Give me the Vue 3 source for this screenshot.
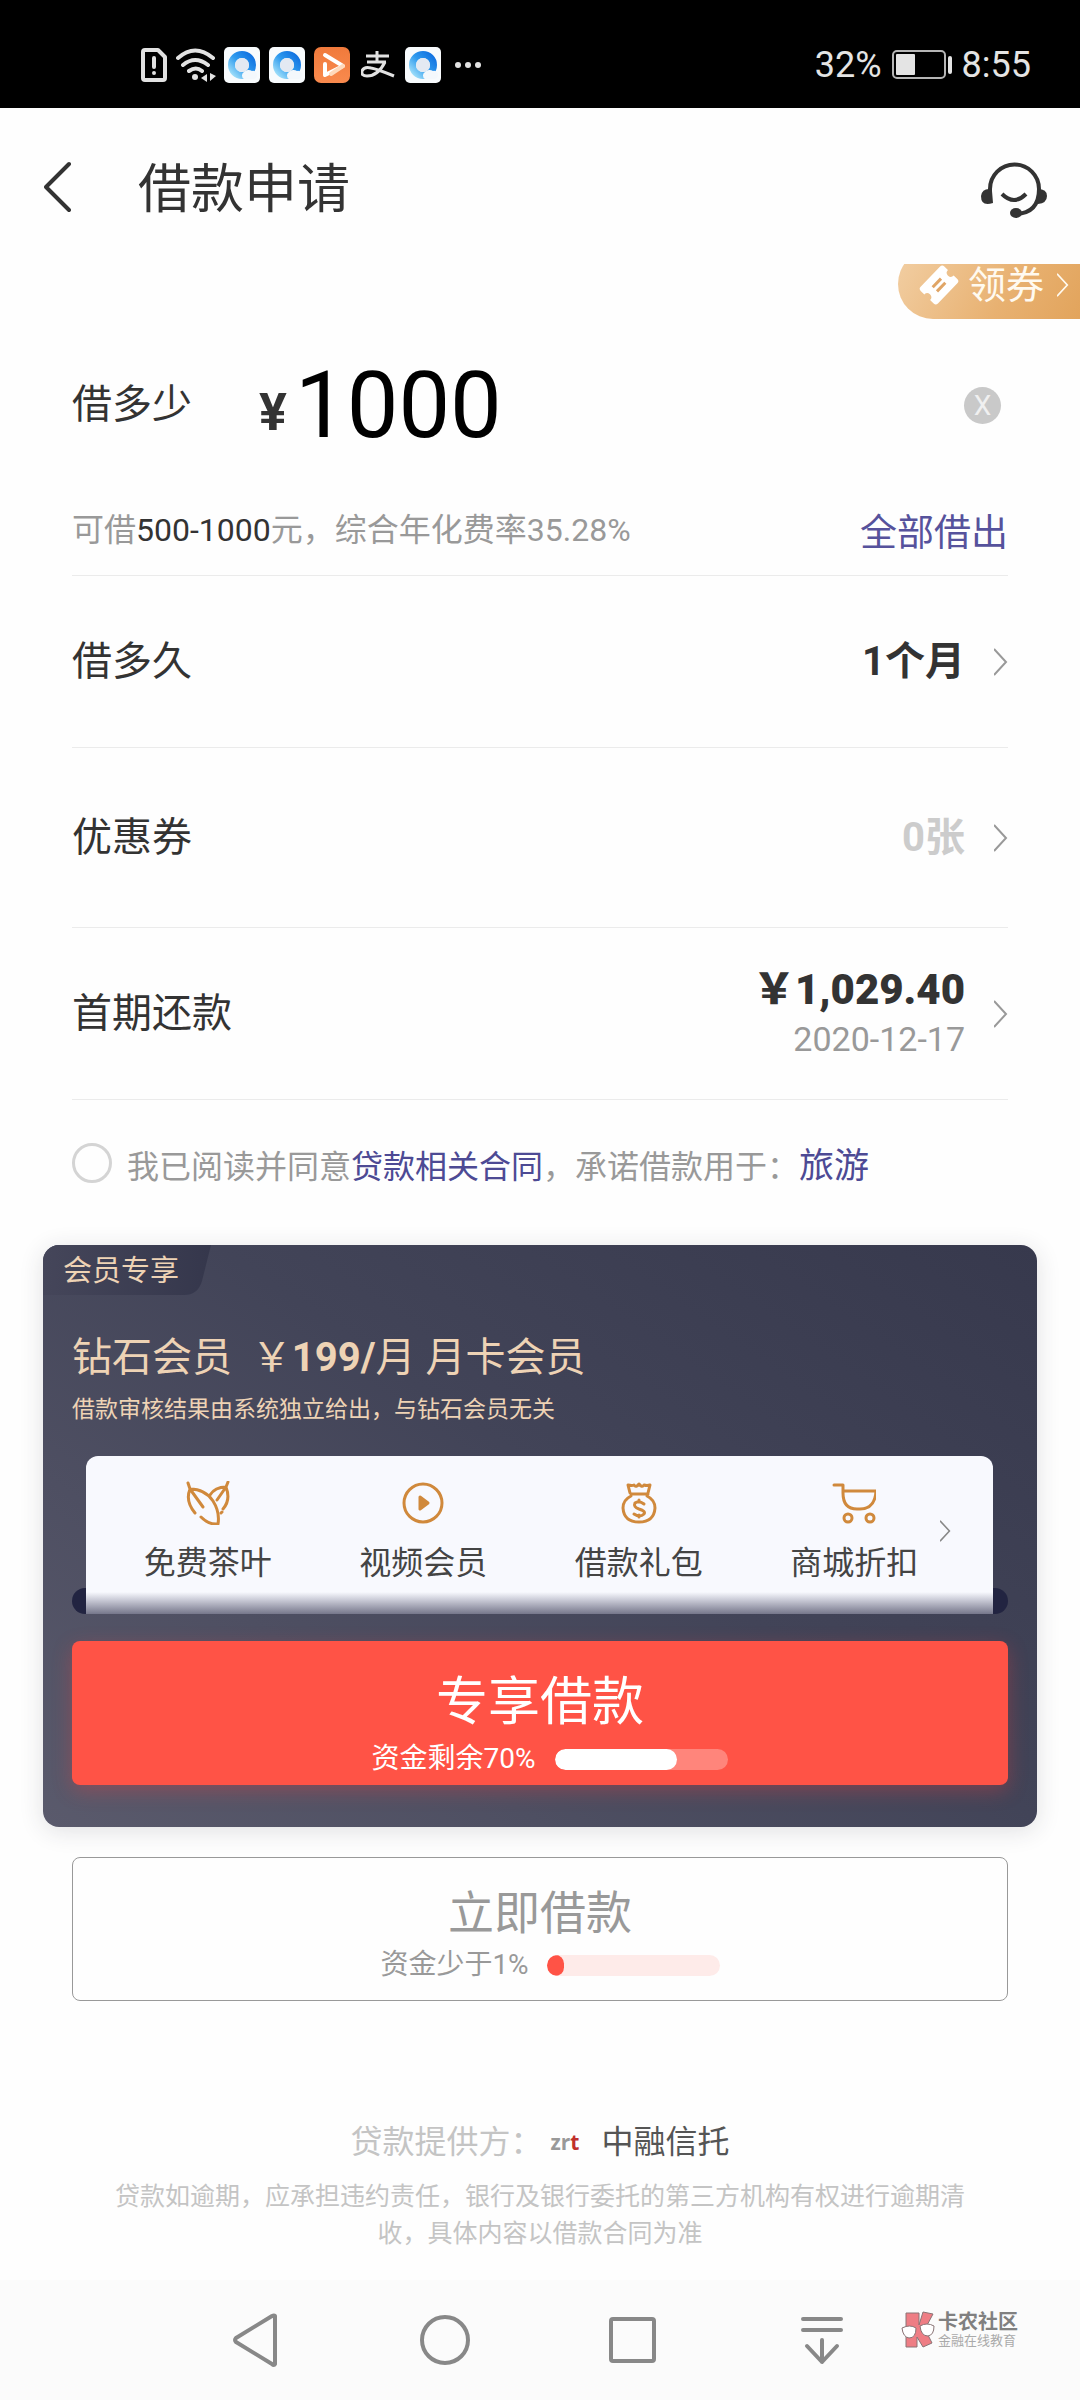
<script setup>
import { ref } from 'vue'

const amount = ref('1000')
const agreed = ref(false)

const perks = [
  { id: 'tea', label: '免费茶叶' },
  { id: 'video', label: '视频会员' },
  { id: 'gift', label: '借款礼包' },
  { id: 'mall', label: '商城折扣' },
]
const memberFund = 70
const normalFund = 10
</script>

<template>
  <div class="page">
    <svg class="defs" aria-hidden="true">
      <defs>
        <linearGradient id="ring" x1="1" y1="0" x2="0" y2="1">
          <stop offset="0" stop-color="#0f6fe0" />
          <stop offset="0.5" stop-color="#2f9bee" />
          <stop offset="1" stop-color="#a5e2fa" />
        </linearGradient>
        <linearGradient id="orange" x1="0" y1="0" x2="0" y2="1">
          <stop offset="0" stop-color="#f07a3c" />
          <stop offset="1" stop-color="#f98a4e" />
        </linearGradient>
        <symbol id="browser" viewBox="0 0 36 36">
          <rect width="36" height="36" rx="5" fill="#f8fbfd" />
          <circle cx="18" cy="18" r="10.500" fill="none" stroke="url(#ring)" stroke-width="7" />
          <circle cx="18" cy="18" r="7" fill="#e3e9f2" />
          <path d="M20 32a4 4 0 0 1 0-7 6 6 0 0 1 8-1 4 4 0 0 1 2 8z" fill="#f4f8fc" />
        </symbol>
        <symbol id="chevron" viewBox="0 0 14 28">
          <path d="M0 1l12 13L0 27" fill="none" stroke="currentColor" stroke-width="2" />
        </symbol>
      </defs>
    </svg>

    <div class="status">
      <div class="status-icons">
        <svg width="26" height="34" viewBox="0 0 26 34" fill="none" stroke="#e2e2e2" stroke-width="4" stroke-linejoin="round" stroke-linecap="round">
          <path d="M4 2h13l7 7v21q0 2-2 2H4q-2 0-2-2V4q0-2 2-2z" />
          <path d="M13 10v9M13 25v0" />
        </svg>
        <svg class="wifi" width="40" height="34" viewBox="0 0 40 34" fill="none" stroke="#e2e2e2" stroke-width="4" stroke-linecap="round">
          <path d="M2 10Q19-5 37 10M7 17q12-10 25 0M13 23q7-5 13 0" />
          <circle cx="19" cy="29" r="3" fill="#e2e2e2" stroke="none" />
          <path d="M31 26v8l-6-4zM34 25v8l6-5z" fill="#e2e2e2" stroke="none" />
        </svg>
        <svg width="36" height="36"><use href="#browser" /></svg>
        <svg width="36" height="36"><use href="#browser" /></svg>
        <svg width="36" height="36" viewBox="0 0 36 36">
          <rect width="36" height="36" rx="7" fill="url(#orange)" />
          <path d="M11 8l18 11-18 9V17" fill="none" stroke="#fff" stroke-width="4" stroke-linejoin="round" stroke-linecap="round" />
          <path d="M17 27l12-8" stroke="#ffd9bb" stroke-width="4" stroke-linecap="round" />
        </svg>
        <svg class="pay" width="34" height="28" viewBox="0 0 34 28" fill="none" stroke="#e2e2e2" stroke-width="3">
          <path d="M5 5h23M16 0v11M6 11h19M24 11Q17 25 6 25q-6 0-5-5 2-5 9-3 6 1 23 8" />
        </svg>
        <svg width="36" height="36"><use href="#browser" /></svg>
        <svg class="dots" width="28" height="8" viewBox="0 0 28 8" fill="#e2e2e2">
          <circle cx="4" cy="4" r="3" /><circle cx="14" cy="4" r="3" /><circle cx="24" cy="4" r="3" />
        </svg>
      </div>
      <div class="status-info">
        <span>32%</span>
        <svg width="60" height="30" viewBox="0 0 60 30">
          <rect x="1" y="1" width="52" height="27" rx="4" fill="none" stroke="#b5b5b5" stroke-width="2" />
          <rect x="4" y="4" width="19" height="21" rx="1" fill="#e4e4e4" />
          <rect x="56" y="6" width="4" height="18" rx="2" fill="#e4e4e4" />
        </svg>
        <span>8:55</span>
      </div>
    </div>

    <header class="header">
      <button class="icon-btn" aria-label="返回">
        <svg width="28" height="58" viewBox="0 0 28 58" fill="none" stroke="#333" stroke-width="4" stroke-linecap="round" stroke-linejoin="round">
          <path d="M25 3L2 26l23 23" />
        </svg>
      </button>
      <h1>借款申请</h1>
      <button class="icon-btn" aria-label="客服">
        <svg width="66" height="58" viewBox="0 -2 66 58" fill="none" stroke="#333" stroke-width="4">
          <path d="M9 34V26a24 24 0 0 1 49 0Q58 50 35 51" />
          <path d="M21 31q12 12 24 0" />
          <path d="M8 26q3-1 3 2l1 12q-12 4-12-7 1-7 8-7z" fill="#333" stroke="none" />
          <path d="M57 26q9 0 9 7t-9 8z" fill="#333" stroke="none" />
          <ellipse cx="35" cy="50" rx="6" ry="5" fill="#333" stroke="none" />
        </svg>
      </button>
    </header>

    <main>
      <div class="coupon-clip">
        <button class="coupon">
          <svg width="40" height="40" viewBox="0 0 40 40">
            <g transform="rotate(-46 20 20)">
              <path d="M3 11q0-3 3-3h28q3 0 3 3v5q-4 0-4 4t4 4v5q0 3-3 3H6q-3 0-3-3v-5q4 0 4-4t-4-4z" fill="#fff" />
              <path d="M14 17h12M14 23h12" stroke="#e0a566" stroke-width="3" />
            </g>
          </svg>
          <span>领券</span>
          <svg width="12" height="24"><use href="#chevron" /></svg>
        </button>
      </div>

      <section class="form">
        <div class="amount">
          <label for="amount">借多少</label>
          <span class="yen">¥</span>
          <input id="amount" v-model="amount" inputmode="numeric" />
          <button class="clear" aria-label="清除" @click="amount = ''">X</button>
        </div>
        <div class="hint">
          <span>可借<b>500-1000</b>元，综合年化费率35.28%</span>
          <button class="all" @click="amount = '1000'">全部借出</button>
        </div>
        <button class="row">
          <span>借多久</span>
          <span class="value">1个月</span>
          <svg width="14" height="28"><use href="#chevron" /></svg>
        </button>
        <button class="row tall">
          <span>优惠券</span>
          <span class="value muted">0张</span>
          <svg width="14" height="28"><use href="#chevron" /></svg>
        </button>
        <button class="row">
          <span>首期还款</span>
          <span class="value due"><strong>￥1,029.40</strong><time>2020-12-17</time></span>
          <svg width="14" height="28"><use href="#chevron" /></svg>
        </button>
        <div class="agree">
          <input id="agree" v-model="agreed" type="checkbox" />
          <p>
            <label for="agree">我已阅读并同意</label><a href="#contract">贷款相关合同</a>，承诺借款用于：<a class="use" href="#purpose">旅游</a>
          </p>
        </div>
      </section>

      <section class="card">
        <div class="tab">
          <svg class="tab-bg" viewBox="0 0 168 50" preserveAspectRatio="none" aria-hidden="true">
            <defs>
              <linearGradient id="tabfill" x1="0" y1="0" x2="1" y2="0">
                <stop offset="0" stop-color="#45465a" />
                <stop offset="1" stop-color="#35374c" />
              </linearGradient>
            </defs>
            <path d="M0 0h168l-9 36q-4 14-18 14H0z" fill="url(#tabfill)" />
          </svg>
          <span>会员专享</span>
        </div>
        <div class="card-body">
          <h2>钻石会员&nbsp; ￥<b>199/</b>月 月卡会员</h2>
          <p class="note">借款审核结果由系统独立给出，与钻石会员无关</p>
          <div class="slot">
            <div class="perks">
              <ul>
                <li v-for="perk in perks" :key="perk.id">
                  <svg width="44" height="44" viewBox="0 0 44 44" fill="none" stroke="#d0893c" stroke-width="3" stroke-linecap="round" stroke-linejoin="round">
                    <template v-if="perk.id === 'tea'">
                      <path d="M2 2l2 6Q19 8 27 20q7 11 5 23-9 1-17-7M9 32Q-1 20 4 8l13 18" />
                      <path d="M24 14q5-8 16-8 5 13-3 22M42 1l-2 5-9 13M36 31l-1 1" />
                    </template>
                    <template v-else-if="perk.id === 'video'">
                      <circle cx="22" cy="22" r="19" />
                      <path d="M19 16l8 6-8 6z" fill="#d0893c" />
                    </template>
                    <template v-else-if="perk.id === 'gift'">
                      <path d="M14 15Q6 19 6 27q1 14 16 14t16-14q0-8-8-12M14 13h17M13 12L11 4q4 1 6 0 2 3 5-1 3 4 5 1 3 1 6 0l-2 8" />
                      <path d="M27 23q-5-4-9-1-2 4 4 6 7 2 5 5-4 4-10 0M22 19v2M22 34v2" />
                    </template>
                    <template v-else>
                      <path d="M2 4h9v8q0 16 14 16h3q15 0 16-18H11" />
                      <circle cx="16" cy="37" r="4" /><circle cx="38" cy="37" r="4" />
                    </template>
                  </svg>
                  <span>{{ perk.label }}</span>
                </li>
              </ul>
              <svg class="more" width="11" height="22"><use href="#chevron" /></svg>
            </div>
          </div>
          <button class="cta primary">
            <span class="cta-title">专享借款</span>
            <span class="fund">
              资金剩余70%
              <span class="bar"><i :style="{ width: memberFund + '%' }"></i></span>
            </span>
          </button>
        </div>
      </section>

      <button class="cta plain">
        <span class="cta-title">立即借款</span>
        <span class="fund">
          资金少于1%
          <span class="bar"><i :style="{ width: normalFund + '%' }"></i></span>
        </span>
      </button>

      <footer>
        <p class="provider">
          <span>贷款提供方：</span>
          <span class="zrt">zr<em>t</em></span>
          <strong>中融信托</strong>
        </p>
        <p class="legal">贷款如逾期，应承担违约责任，银行及银行委托的第三方机构有权进行逾期清收，具体内容以借款合同为准</p>
      </footer>
    </main>

    <nav class="nav">
      <button aria-label="后退">
        <svg width="52" height="56" viewBox="0 0 52 56"><path d="M44 4v48q-1 2-3 0L5 30q-2-2 0-4L41 4q2-1 3 0z" /></svg>
      </button>
      <button aria-label="主页">
        <svg width="52" height="56" viewBox="0 0 52 56"><circle cx="25" cy="28" r="23" /></svg>
      </button>
      <button aria-label="最近任务">
        <svg width="52" height="56" viewBox="0 0 52 56"><rect x="2" y="7" width="43" height="42" rx="2" /></svg>
      </button>
      <button aria-label="收起">
        <svg width="52" height="56" viewBox="0 0 52 56"><path d="M5 7h38M5 18h38M24 28v22M9 34l15 16 15-16" /></svg>
      </button>
      <div class="mark">
        <svg width="34" height="38" viewBox="0 0 34 38" stroke="#8a7476" stroke-width="1">
          <path d="M5 2h13v12l4-13 10 2-8 15 7 14-9 4-6-10v10H5z" fill="#ee7d84" />
          <path d="M1 17q8-4 14 0 0 10-7 10-6-1-7-10zM19 15q7-4 14 0 0 9-6 10-7 0-8-10z" fill="#fff" />
        </svg>
        <div>
          <strong>卡农社区</strong>
          <small>金融在线教育</small>
        </div>
      </div>
    </nav>
  </div>
</template>

<style>
body {
  margin: 0;
  background: #fefefe;
}
</style>

<style scoped>
.page {
  display: flex;
  flex-direction: column;
  min-height: 100vh;
  color: #333;
  font-family: Roboto, "Noto Sans CJK SC", sans-serif;
  line-height: 1.4;
}
.defs {
  position: absolute;
  width: 0;
  height: 0;
}
button {
  padding: 0;
  border: 0;
  background: none;
  color: inherit;
  font: inherit;
  cursor: pointer;
}
svg {
  display: block;
  flex: none;
}
h1, h2, p, ul {
  margin: 0;
  padding: 0;
  font-weight: 400;
}
a {
  color: #4d4a94;
  text-decoration: none;
}

.status {
  display: flex;
  align-items: center;
  justify-content: space-between;
  height: 108px;
  padding: 22px 49px 0 141px;
  box-sizing: border-box;
  background: #000;
  color: #e4e4e4;
  font-size: 36px;
}
.status-icons {
  display: flex;
  align-items: center;
  gap: 9px;
}
.wifi {
  margin-right: -1px;
}
.pay {
  margin: 0 1px 0 2px;
}
.dots {
  margin-left: 4px;
}
.status-info {
  display: flex;
  align-items: center;
  gap: 10px;
}

.header {
  display: flex;
  align-items: center;
  height: 156px;
  padding: 8px 33px 0 44px;
  box-sizing: border-box;
}
.header h1 {
  flex: 1;
  padding-left: 66px;
  font-size: 53px;
  line-height: 72px;
}

.coupon-clip {
  display: flex;
  justify-content: flex-end;
  align-items: flex-end;
  height: 55px;
  overflow: hidden;
}
.coupon {
  display: flex;
  align-items: center;
  gap: 9px;
  height: 70px;
  padding: 2px 11px 0 21px;
  box-sizing: border-box;
  border-radius: 35px 0 0 35px;
  background: linear-gradient(120deg, #f2cfa4, #e8b171 60%, #e2a45c);
  color: #fffaf0;
  font-size: 38px;
  line-height: 38px;
}
.coupon span {
  margin-right: 4px;
}

.form {
  padding: 0 72px;
}
.amount {
  display: flex;
  align-items: center;
  height: 168px;
  padding-top: 4px;
  box-sizing: border-box;
  font-size: 40px;
}
.yen {
  width: 36px;
  margin: 16px 0 0 67px;
  font-size: 52px;
  font-weight: 700;
}
.amount input {
  flex: 1;
  min-width: 0;
  padding: 0;
  border: 0;
  outline: 0;
  background: none;
  color: #000;
  font: 92px Roboto, sans-serif;
}
.clear {
  width: 37px;
  height: 37px;
  margin-right: 7px;
  border-radius: 50%;
  background: #c9c9c9;
  color: #f0f0f0;
  font-size: 28px;
  line-height: 37px;
}
.hint {
  display: flex;
  align-items: center;
  justify-content: space-between;
  height: 89px;
  padding-bottom: 2px;
  box-sizing: border-box;
  border-bottom: 1px solid #ebebeb;
  color: #999;
  font-size: 32px;
}
.hint b {
  color: #333;
  font-weight: 400;
}
.all {
  padding-top: 8px;
  color: #56529c;
  font-size: 37px;
}
.row {
  display: flex;
  align-items: center;
  width: 100%;
  height: 172px;
  border-bottom: 1px solid #ebebeb;
  font-size: 40px;
}
.row.tall {
  height: 180px;
}
.row svg {
  color: #999;
}
.value {
  flex: 1;
  padding-right: 29px;
  font-weight: 700;
  text-align: right;
}
.muted {
  color: #ccc;
}
.due strong,
.due time {
  display: block;
}
.due strong {
  font-size: 42px;
  line-height: 50px;
}
.due time {
  color: #999;
  font-size: 34px;
  font-weight: 400;
  line-height: 48px;
}
.agree {
  display: flex;
  align-items: center;
  height: 145px;
  padding-bottom: 20px;
  box-sizing: border-box;
  color: #999;
  font-size: 32px;
}
.agree input {
  width: 40px;
  height: 40px;
  margin: 0 15px 0 0;
  border: 3px solid #d4d4d4;
  border-radius: 50%;
  appearance: none;
}
.agree p {
  padding-top: 8px;
}
.agree input:checked {
  background: #4d4a94;
}
.use {
  font-size: 35px;
}

.card {
  margin: 0 43px;
  border-radius: 16px;
  overflow: hidden;
  background: linear-gradient(215deg, #37394d, #424458 45%, #5a5a6c);
  box-shadow: 0 4px 24px rgba(40, 44, 60, 0.14);
  color: #eed3b5;
}
.tab {
  display: flex;
  align-items: center;
  position: relative;
  width: 168px;
  height: 50px;
}
.tab-bg {
  position: absolute;
  inset: 0;
  width: 100%;
  height: 100%;
}
.tab span {
  position: relative;
  padding: 2px 0 0 20px;
  font-size: 29px;
}
.card-body {
  padding: 35px 29px 42px;
}
.card h2 {
  font-size: 40px;
  line-height: 56px;
}
.note {
  margin-top: 8px;
  font-size: 23px;
  line-height: 32px;
}
.slot {
  position: relative;
  margin: 30px 0 27px;
  padding: 0 15px 0 14px;
}
.slot::before {
  content: "";
  position: absolute;
  inset: auto 0 0;
  height: 26px;
  border-radius: 13px;
  background: #222441;
}
.perks {
  display: flex;
  position: relative;
  height: 158px;
  padding: 0 31px 0 14px;
  box-sizing: border-box;
  border-radius: 12px 12px 0 0;
  background: linear-gradient(#f8f9fe 136px, #c9cad6 144px, #76778b);
}
.perks ul {
  display: flex;
  flex: 1;
  list-style: none;
}
.perks li {
  display: flex;
  flex: 1;
  flex-direction: column;
  align-items: center;
  gap: 14px;
  padding-top: 25px;
  color: #444;
  font-size: 32px;
  line-height: 48px;
}
.more {
  position: absolute;
  top: 64px;
  right: 42px;
  color: #888;
}
.cta {
  display: flex;
  flex-direction: column;
  align-items: center;
  justify-content: center;
  width: 100%;
  height: 144px;
  padding-top: 8px;
  box-sizing: border-box;
  border-radius: 8px;
}
.cta-title {
  line-height: 72px;
}
.fund {
  display: flex;
  align-items: center;
  gap: 20px;
  padding-left: 20px;
  font-size: 28px;
  line-height: 40px;
}
.bar {
  width: 173px;
  height: 21px;
  border-radius: 11px;
  overflow: hidden;
}
.bar i {
  display: block;
  height: 100%;
  border-radius: 11px;
}
.primary {
  padding-top: 20px;
  background: #ff5346;
  box-shadow: 0 6px 20px rgba(255, 60, 60, 0.3);
  color: #fff;
}
.primary .cta-title {
  font-size: 52px;
}
.primary .bar {
  background: #ff857b;
}
.primary .bar i {
  background: #fff;
}
.plain {
  width: calc(100% - 144px);
  margin: 30px 72px 0;
  border: 1px solid #999;
  color: #999;
}
.plain .cta-title {
  font-size: 46px;
  line-height: 64px;
}
.plain .fund {
  gap: 18px;
}
.plain .bar {
  background: #feebe9;
}
.plain .bar i {
  background: #ff5346;
}

footer {
  padding: 119px 108px 28px;
  color: #c4c4c4;
  text-align: center;
}
.provider {
  display: flex;
  align-items: center;
  justify-content: center;
  font-size: 32px;
  line-height: 44px;
}
.provider strong {
  color: #555;
  font-weight: 400;
}
.zrt {
  margin: 0 22px 0 8px;
  color: #999;
  font: 700 21px "Open Sans", sans-serif;
}
.zrt em {
  color: #c0302c;
  font-style: normal;
}
.legal {
  margin-top: 14px;
  font-size: 25px;
  line-height: 37px;
}

.nav {
  display: flex;
  position: relative;
  height: 120px;
  margin-top: auto;
  padding: 0 15%;
  background: #fbfbfb;
}
.nav button {
  display: flex;
  flex: 1;
  align-items: center;
  justify-content: center;
}
.nav button svg {
  fill: none;
  stroke: #888;
  stroke-width: 4;
  stroke-linecap: round;
  stroke-linejoin: round;
}
.mark {
  display: flex;
  align-items: center;
  gap: 3px;
  position: absolute;
  top: 31px;
  right: 62px;
}
.mark strong,
.mark small {
  display: block;
  color: #808080;
}
.mark strong {
  font-size: 20px;
  line-height: 22px;
}
.mark small {
  color: #aaa;
  font-size: 13px;
  line-height: 16px;
}
</style>
